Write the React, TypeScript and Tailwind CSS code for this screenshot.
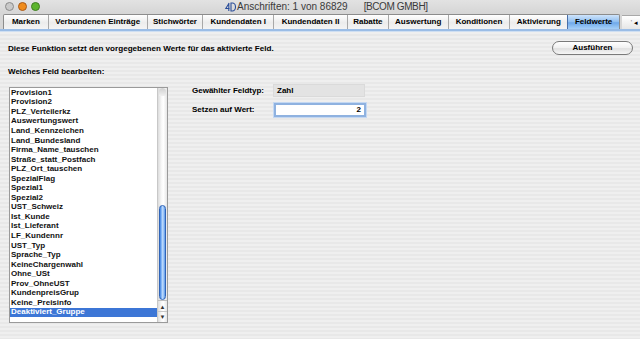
import React from "react";

const tabs = [
  { label: "Marken", cls: "w-[44px]" },
  { label: "Verbundenen Einträge", cls: "w-[99px]" },
  { label: "Stichwörter", cls: "w-[56px]" },
  { label: "Kundendaten I", cls: "w-[71px]" },
  { label: "Kundendaten II", cls: "w-[74px]" },
  { label: "Rabatte", cls: "w-[41px]" },
  { label: "Auswertung", cls: "w-[60px]" },
  { label: "Konditionen", cls: "w-[62px]" },
  { label: "Aktivierung", cls: "w-[58px]" },
];

const items = [
  "Provision1",
  "Provision2",
  "PLZ_Verteilerkz",
  "Auswertungswert",
  "Land_Kennzeichen",
  "Land_Bundesland",
  "Firma_Name_tauschen",
  "Straße_statt_Postfach",
  "PLZ_Ort_tauschen",
  "SpezialFlag",
  "Spezial1",
  "Spezial2",
  "UST_Schweiz",
  "Ist_Kunde",
  "Ist_Lieferant",
  "LF_Kundennr",
  "UST_Typ",
  "Sprache_Typ",
  "KeineChargenwahl",
  "Ohne_USt",
  "Prov_OhneUST",
  "KundenpreisGrup",
  "Keine_Preisinfo",
  "Deaktiviert_Gruppe",
];

export default function App() {
  return (
    <div className="w-[640px] h-[339px] overflow-hidden flex flex-col font-['Liberation_Sans',Arial,sans-serif] text-black bg-[#ececec]">
      {/* Title bar */}
      <div className="h-[13px] shrink-0 flex flex-row items-center bg-[linear-gradient(to_bottom,#e2e2e2,#d6d6d6)] text-[10px] text-[#3a3a3a] leading-none whitespace-nowrap">
        <div className="flex flex-row items-center gap-[4px] pl-[5px] w-[225px] shrink-0">
          <span className="block w-[9px] h-[9px] rounded-[50%] bg-[#c9c9c9] border border-[#8a8a8a]"></span>
          <span className="block w-[9px] h-[9px] rounded-[50%] bg-[#f08c1c] border border-[#a85a1a]"></span>
          <span className="block w-[9px] h-[9px] rounded-[50%] bg-[#5cb42c] border border-[#3f7d22]"></span>
        </div>
        <svg width="11" height="10" viewBox="0 0 11 10" className="mr-[1px] shrink-0">
          <path d="M4.2 1 L0.8 6.5 H4.6 M3.8 1 V9" fill="none" stroke="#2a4d9a" strokeWidth="1.1" />
          <path d="M6 1 H7.3 A3.2 4 0 0 1 7.3 9 H6 Z" fill="none" stroke="#2a4d9a" strokeWidth="1.1" />
        </svg>
        <span>Anschriften: 1 von 86829</span>
        <span className="ml-[16px] tracking-[-0.4px]">[BCOM GMBH]</span>
      </div>

      {/* Tab row */}
      <div className="h-[16px] shrink-0 flex items-end pl-[3px] bg-[#d6d6d6]">
        <div className="flex h-[15px] border border-[#8c8c8c] border-b-0 rounded-t-[2px] overflow-hidden">
          {tabs.map((t, i) => (
            <div
              key={t.label}
              className={`${t.cls} h-full flex items-center justify-center text-[8px] font-bold leading-none whitespace-nowrap bg-[linear-gradient(to_bottom,#ffffff,#ececec_55%,#f4f4f4)] ${i > 0 ? "border-l border-[#a8a8a8]" : ""}`}
            >
              {t.label}
            </div>
          ))}
          <div className="w-[52px] h-full flex items-center justify-center text-[8px] font-bold leading-none text-black border-l border-[#4a6fa8] bg-[linear-gradient(to_bottom,#cfe4fb,#8dbdf0_50%,#6ea8ea_55%,#a6d0f8)]">
            Feldwerte
          </div>
        </div>
        <div className="w-[18px] h-[14px] ml-[2px] flex items-center justify-end pr-[2px] text-[7px] leading-none text-black bg-[linear-gradient(to_bottom,#ffffff,#e6e6e6)] border-t border-[#a8a8a8]">
          <span className="mr-[2px] text-[#777]">'</span>◂
        </div>
      </div>
      <div className="h-[2px] shrink-0 bg-[#9bbde6]" />
      <div className="h-[1px] shrink-0 bg-[#cfdff2]" />

      {/* Content */}
      <div className="flex-1 relative bg-[image:repeating-linear-gradient(to_bottom,#efefef_0px,#efefef_2px,#e8e8e8_2px,#e8e8e8_4px)] px-[8px] pt-[9px]">
        <div className="flex items-start justify-between h-[14px]">
          <div className="text-[8.1px] font-bold leading-none mt-[4px] whitespace-nowrap">
            Diese Funktion setzt den vorgegebenen Werte für das aktivierte Feld.
          </div>
          <div className="w-[81px] h-[14px] mr-[-1px] rounded-full border border-[#7a7a7a] flex items-center justify-center text-[8px] font-bold leading-none bg-[linear-gradient(to_bottom,#ffffff,#f0f0f0_50%,#e0e0e0_55%,#f6f6f6)]">
            Ausführen
          </div>
        </div>

        <div className="text-[8px] font-bold leading-none mt-[13px] whitespace-nowrap">
          Welches Feld bearbeiten:
        </div>

        <div className="flex items-start mt-[11px]">
          {/* List box */}
          <div className="ml-[1px] w-[159px] h-[236px] border border-[#9a9a9a] bg-white flex">
            <div className="flex-1 flex flex-col">
              {items.map((it, i) => {
                const sel = i === items.length - 1;
                return (
                  <div
                    key={it}
                    className={`h-[9.55px] shrink-0 flex items-center pl-[1px] text-[8px] font-bold leading-none whitespace-nowrap ${sel ? "bg-[#3c76d6] text-white" : "text-[#111]"}`}
                  >
                    {it}
                  </div>
                );
              })}
            </div>
            {/* Scrollbar */}
            <div className="w-[10px] h-full flex flex-col border-l border-[#c8c8c8] bg-[linear-gradient(to_right,#dcdcdc,#f8f8f8_40%,#ffffff_60%,#e6e6e6)]">
              <div className="h-[8px] mx-[1px] rounded-t-[4px] bg-[linear-gradient(to_bottom,#d0d0d0,#f0f0f0)]" />
              <div className="h-[109px]" />
              <div className="h-[95px] mx-[1px] rounded-[5px] border border-[#2f64b8] bg-[linear-gradient(to_right,#3f82e2,#93c0f8_35%,#c4defc_55%,#5a98ea)]" />
              <div className="flex-1 flex flex-col items-center justify-center border-t border-[#bdbdbd]">
                <div className="h-[9px] flex items-center text-[6px] leading-none text-[#333]">▲</div>
                <div className="w-full h-px bg-[#c8c8c8]" />
                <div className="h-[9px] flex items-center text-[6px] leading-none text-[#333]">▼</div>
              </div>
            </div>
          </div>

          {/* Right form */}
          <div className="ml-[24px] mt-[-3px] flex flex-col">
            <div className="flex items-center h-[13px]">
              <div className="w-[81px] text-[8px] font-bold leading-none whitespace-nowrap">Gewählter Feldtyp:</div>
              <div className="w-[92px] h-[13px] flex items-center pl-[3px] text-[8px] font-bold leading-none bg-[#e3e3e3] border border-[#dadada]">
                Zahl
              </div>
            </div>
            <div className="flex items-center h-[14px] mt-[6px]">
              <div className="w-[82px] text-[8px] font-bold leading-none whitespace-nowrap">Setzen auf Wert:</div>
              <div className="w-[92px] h-[14px] flex items-center justify-end pr-[3px] text-[8px] font-bold leading-none bg-white border-[2px] border-[#8fb2e0] shadow-[0_0_0_1px_#c4d8f2]">
                2
              </div>
            </div>
          </div>
        </div>
      </div>
    </div>
  );
}
